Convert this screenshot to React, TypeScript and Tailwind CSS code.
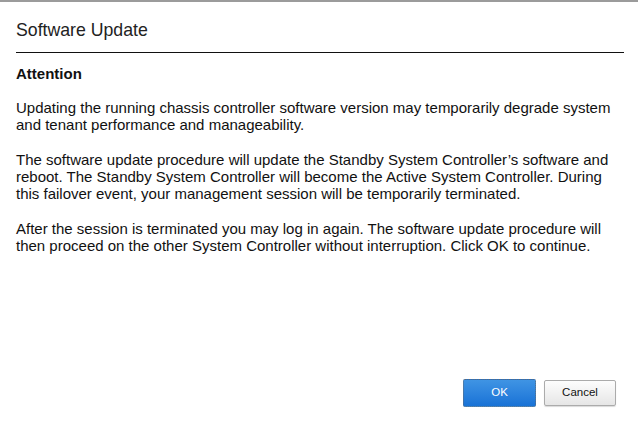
import React from "react";

export default function App() {
  return (
    <div
      className="w-[638px] h-[424px] bg-white flex flex-col text-[#111]"
      style={{ fontFamily: '"Liberation Sans", Arial, Helvetica, sans-serif' }}
    >
      <div className="h-[2px] bg-[#9b9b9b]" />
      <div className="px-4 flex flex-col flex-1">
        <div className="pt-[18px] pb-[12px] border-b border-[#111] mr-[-2px]">
          <h1 className="text-[17.7px] leading-[20px] text-[#222]">Software Update</h1>
        </div>
        <div className="flex-1 text-[15px] leading-[17px] mr-[-2px]">
          <p className="font-bold mt-[12px]">Attention</p>
          <p className="mt-[17px]">
            Updating the running chassis controller software version may temporarily degrade system and tenant performance and manageability.
          </p>
          <p className="mt-[18px]">
            The software update procedure will update the Standby System Controller’s software and reboot. The Standby System Controller will become the Active System Controller. During this failover event, your management session will be temporarily terminated.
          </p>
          <p className="mt-[18px]">
            After the session is terminated you may log in again. The software update procedure will then proceed on the other System Controller without interruption. Click OK to continue.
          </p>
        </div>
      </div>
      <div className="flex justify-end items-center gap-2 pr-[22px] pb-[17px]">
        <button className="w-[73px] h-[28px] border border-dotted border-[#5f6b78] bg-gradient-to-b from-[#3f94e4] to-[#1872d6] text-white text-[11.5px] rounded-[2px]">
          OK
        </button>
        <button className="w-[72px] h-[26px] border border-[#ababab] bg-gradient-to-b from-[#fdfdfd] to-[#e6e6e6] text-[#111] text-[11.5px] rounded-[2px] shadow-[0_1px_1px_rgba(0,0,0,0.15)]">
          Cancel
        </button>
      </div>
    </div>
  );
}
